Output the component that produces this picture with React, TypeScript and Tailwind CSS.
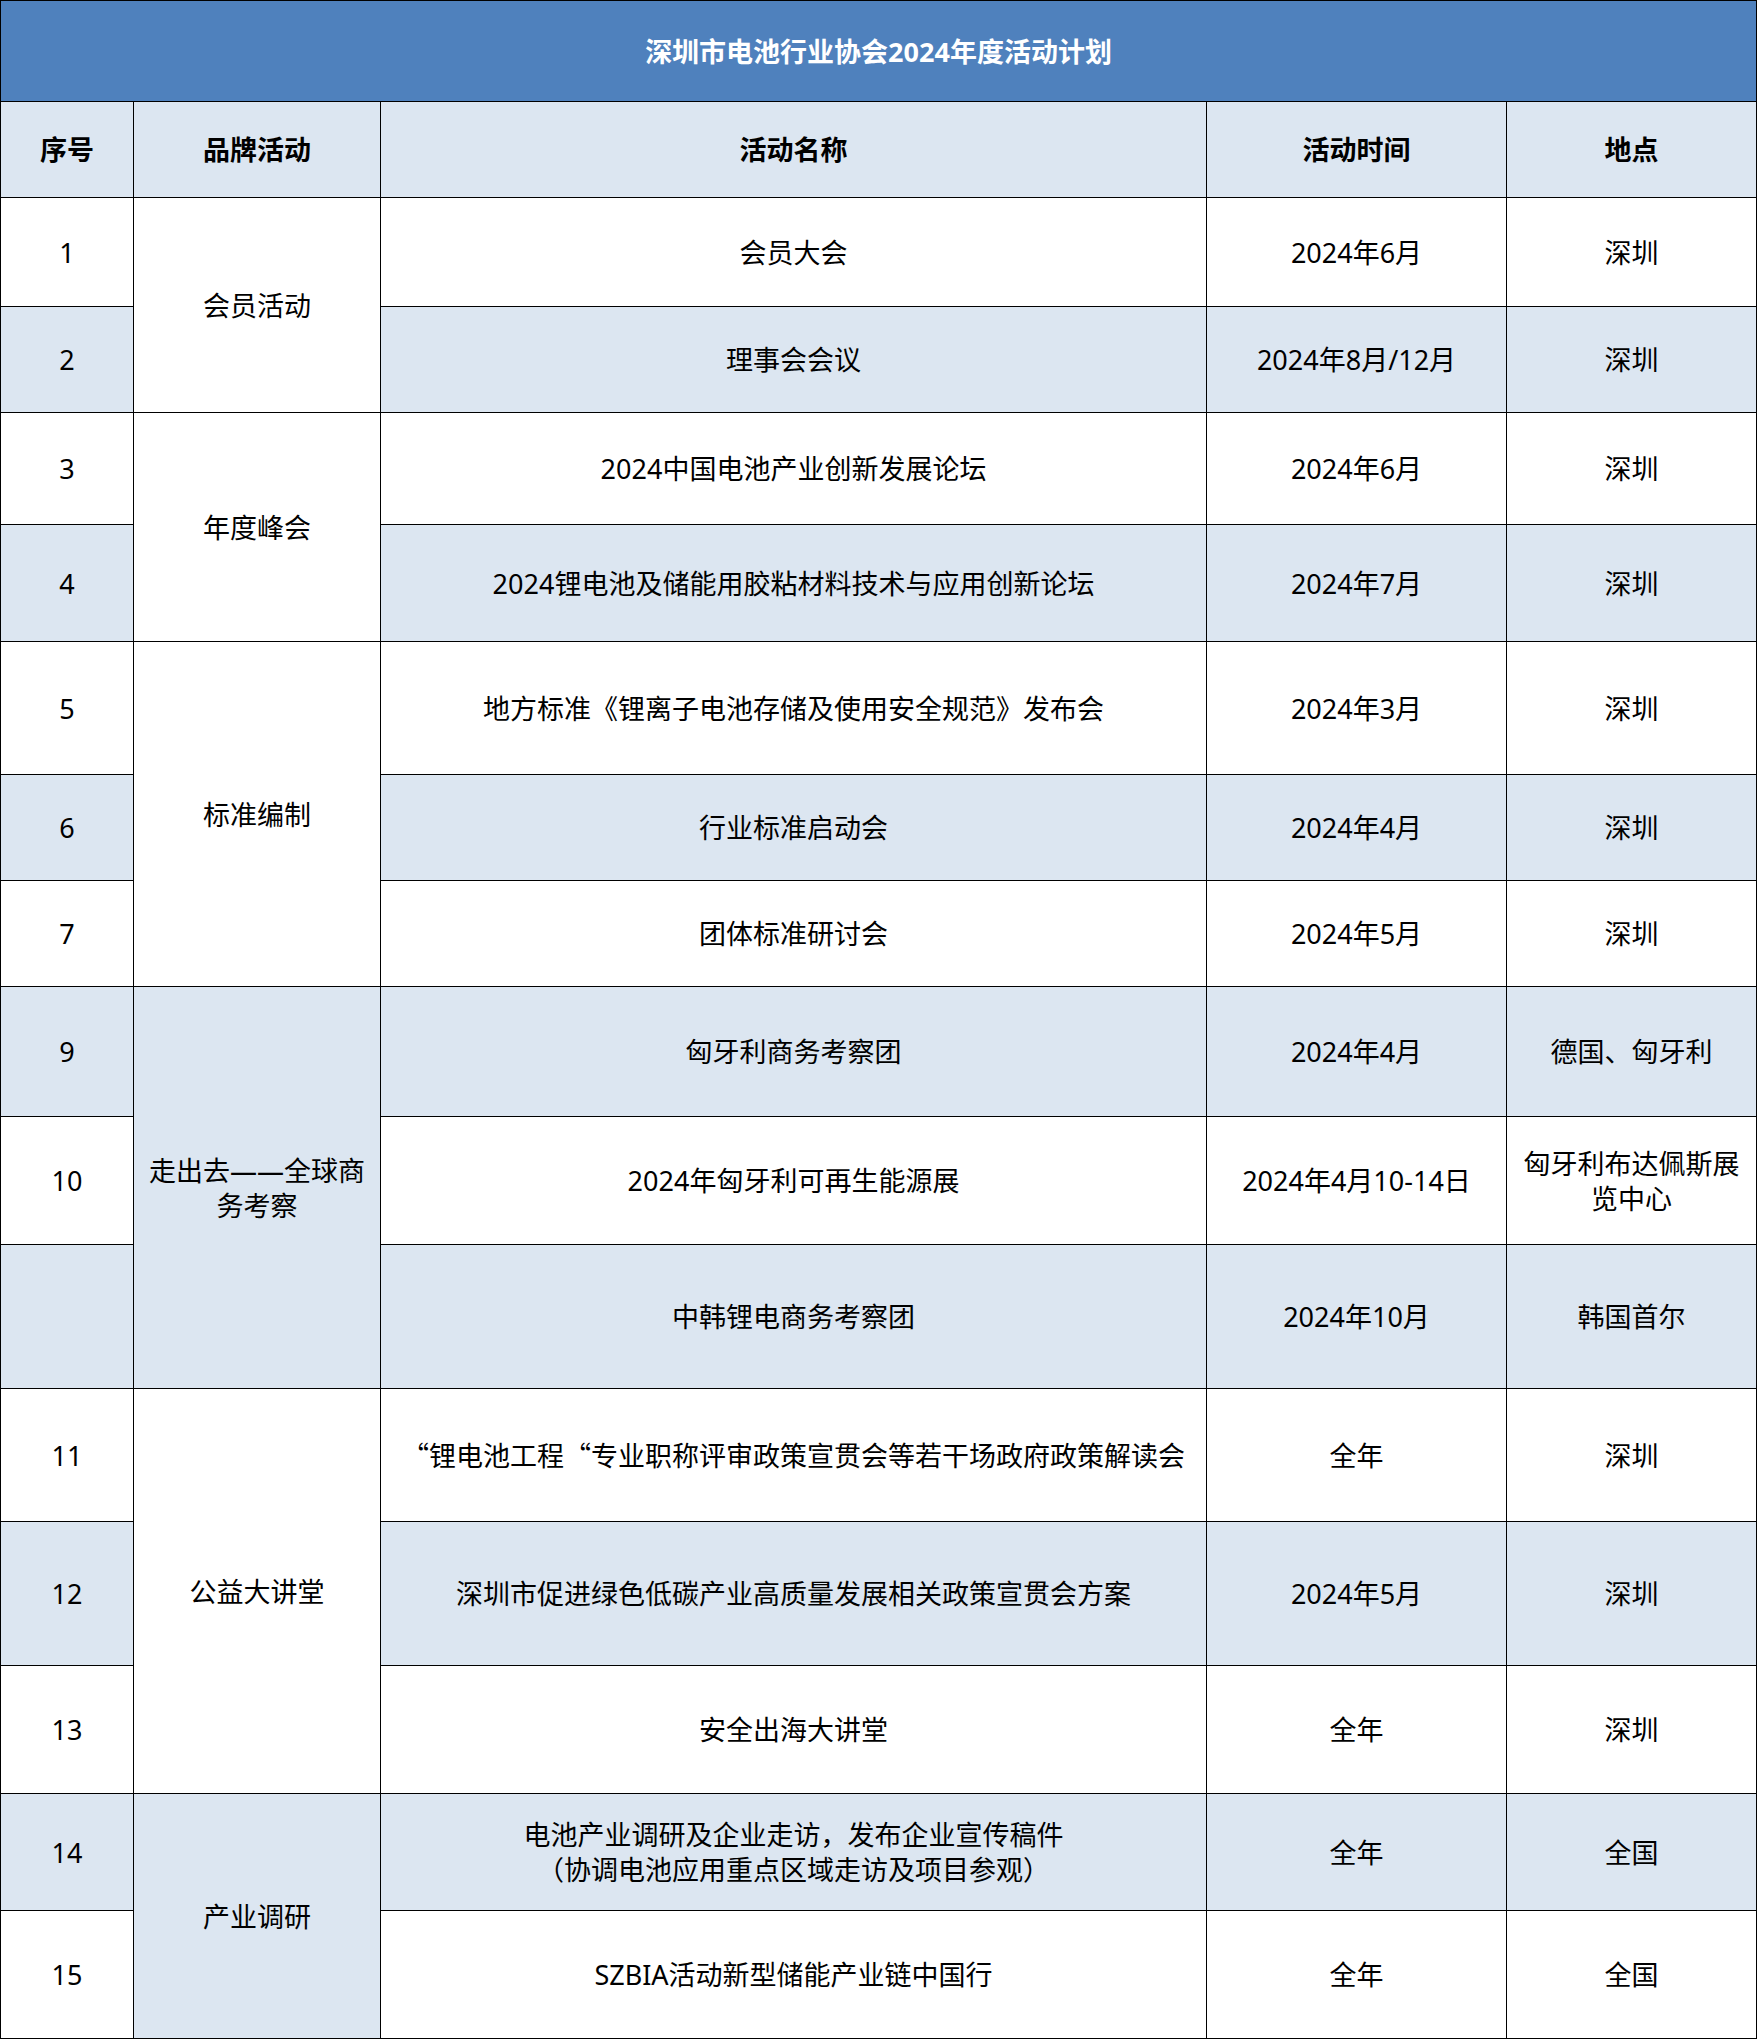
import React from 'react';

type Brand = { text: string; span: number; blue: boolean };

type Row = {
  no: string;
  brand?: Brand;
  name: React.ReactNode;
  time: string;
  place: string;
  h: number;
  blue: boolean;
};

// CJK-width quotes, as in the source sheet
const Q = () => <span className="font-['Noto_Sans_CJK_SC',sans-serif]">“</span>;

const ROWS: Row[] = [
  { no: '1', brand: { text: '会员活动', span: 2, blue: false }, name: '会员大会', time: '2024年6月', place: '深圳', h: 109, blue: false },
  { no: '2', name: '理事会会议', time: '2024年8月/12月', place: '深圳', h: 106, blue: true },
  { no: '3', brand: { text: '年度峰会', span: 2, blue: false }, name: '2024中国电池产业创新发展论坛', time: '2024年6月', place: '深圳', h: 112, blue: false },
  { no: '4', name: '2024锂电池及储能用胶粘材料技术与应用创新论坛', time: '2024年7月', place: '深圳', h: 117, blue: true },
  { no: '5', brand: { text: '标准编制', span: 3, blue: false }, name: '地方标准《锂离子电池存储及使用安全规范》发布会', time: '2024年3月', place: '深圳', h: 133, blue: false },
  { no: '6', name: '行业标准启动会', time: '2024年4月', place: '深圳', h: 106, blue: true },
  { no: '7', name: '团体标准研讨会', time: '2024年5月', place: '深圳', h: 106, blue: false },
  { no: '9', brand: { text: '走出去——全球商务考察', span: 3, blue: true }, name: '匈牙利商务考察团', time: '2024年4月', place: '德国、匈牙利', h: 130, blue: true },
  { no: '10', name: '2024年匈牙利可再生能源展', time: '2024年4月10-14日', place: '匈牙利布达佩斯展览中心', h: 128, blue: false },
  { no: '', name: '中韩锂电商务考察团', time: '2024年10月', place: '韩国首尔', h: 144, blue: true },
  {
    no: '11',
    brand: { text: '公益大讲堂', span: 3, blue: false },
    name: (
      <>
        <Q />锂电池工程<Q />专业职称评审政策宣贯会等若干场政府政策解读会
      </>
    ),
    time: '全年',
    place: '深圳',
    h: 133,
    blue: false,
  },
  { no: '12', name: '深圳市促进绿色低碳产业高质量发展相关政策宣贯会方案', time: '2024年5月', place: '深圳', h: 144, blue: true },
  { no: '13', name: '安全出海大讲堂', time: '全年', place: '深圳', h: 128, blue: false },
  {
    no: '14',
    brand: { text: '产业调研', span: 2, blue: true },
    name: (
      <>
        电池产业调研及企业走访，发布企业宣传稿件
        <br />
        （协调电池应用重点区域走访及项目参观）
      </>
    ),
    time: '全年',
    place: '全国',
    h: 117,
    blue: true,
  },
  { no: '15', name: 'SZBIA活动新型储能产业链中国行', time: '全年', place: '全国', h: 128, blue: false },
];

const cell = 'border border-black px-2 text-center align-middle';

export default function App() {
  return (
    <div className="w-[1757px] bg-white font-['Noto_Sans','Noto_Sans_CJK_SC',sans-serif] text-[27px] leading-[35px] text-black">
      <table className="w-[1756px] table-fixed border-collapse">
        <colgroup>
          <col className="w-[133px]" />
          <col className="w-[247px]" />
          <col className="w-[826px]" />
          <col className="w-[300px]" />
          <col className="w-[250px]" />
        </colgroup>
        <thead>
          {/* title bar */}
          <tr className="h-[101px]">
            <th colSpan={5} className={`${cell} bg-[#4f81bd] font-bold text-white`}>
              深圳市电池行业协会2024年度活动计划
            </th>
          </tr>
          <tr className="h-[96px] bg-[#dce6f1]">
            <th className={`${cell} font-bold`}>序号</th>
            <th className={`${cell} font-bold`}>品牌活动</th>
            <th className={`${cell} font-bold`}>活动名称</th>
            <th className={`${cell} font-bold`}>活动时间</th>
            <th className={`${cell} font-bold`}>地点</th>
          </tr>
        </thead>
        <tbody>
          {ROWS.map((r, i) => {
            const bg = r.blue ? 'bg-[#dce6f1]' : 'bg-white';
            return (
              <tr key={i} style={{ height: r.h }}>
                <td className={`${cell} ${bg}`}>{r.no}</td>
                {r.brand && (
                  <td
                    rowSpan={r.brand.span}
                    className={`${cell} ${r.brand.blue ? 'bg-[#dce6f1]' : 'bg-white'}`}
                  >
                    {r.brand.text}
                  </td>
                )}
                <td className={`${cell} ${bg}`}>{r.name}</td>
                <td className={`${cell} ${bg}`}>{r.time}</td>
                <td className={`${cell} ${bg}`}>{r.place}</td>
              </tr>
            );
          })}
        </tbody>
      </table>
    </div>
  );
}
